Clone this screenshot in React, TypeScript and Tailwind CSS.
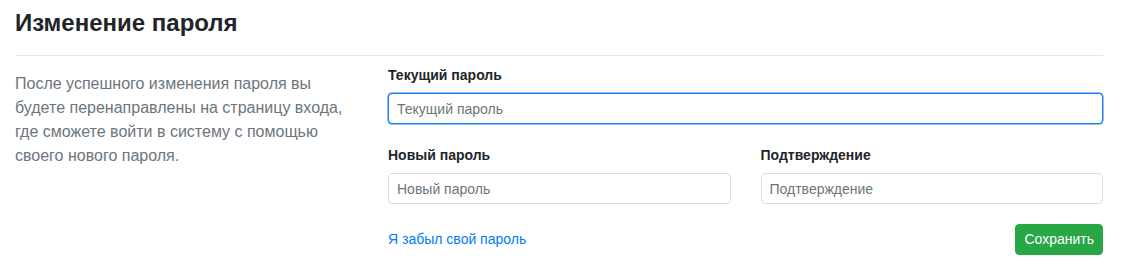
import React from 'react';

const inputBase =
  'block w-full h-[31px] px-2 text-[14px] leading-[21px] text-[#495057] bg-white rounded-[4px] border placeholder:text-[#6c757d] outline-none';

const Field: React.FC<{ label: string; focused?: boolean }> = ({ label, focused }) => (
  <div>
    <label className="block text-[14px] leading-[21px] font-bold text-[#212529] mb-[7px]">{label}</label>
    <input
      type="password"
      placeholder={label}
      className={`${inputBase} ${
        focused
          ? 'border-[#1f7ef5] shadow-[0_0_0_0.5px_#1f7ef5]'
          : 'border-[#dadde1]'
      }`}
    />
  </div>
);

export default function App() {
  return (
    <div
      className="bg-white w-[1121px] h-[277px] pl-[15px] pr-[18px] pt-[8px]"
      style={{ fontFamily: '"Liberation Sans", Arial, sans-serif' }}
    >
      <h1 className="text-[24px] leading-[29px] font-bold text-[#212529]">Изменение пароля</h1>
      <div className="mt-[18px] border-t border-[#e5e5e5]" />

      <div className="flex gap-[30px]">
        {/* Description */}
        <div className="w-[343px] shrink-0 pt-[16px]">
          <p className="text-[16px] leading-[24px] text-[#6c757d]">
            После успешного изменения пароля вы будете перенаправлены на страницу входа, где сможете
            войти в систему с помощью своего нового пароля.
          </p>
        </div>

        {/* Form */}
        <form className="flex-1 pt-[9px]" onSubmit={(e) => e.preventDefault()}>
          <Field label="Текущий пароль" focused />

          <div className="grid grid-cols-2 gap-x-[30px] mt-[21px]">
            <Field label="Новый пароль" />
            <Field label="Подтверждение" />
          </div>

          <div className="flex items-center justify-between mt-[20px]">
            <a href="#" className="text-[14px] leading-[21px] text-[#007bff]">
              Я забыл свой пароль
            </a>
            <button
              type="submit"
              className="h-[31px] px-2 text-[14px] leading-[21px] text-white bg-[#28a745] border border-[#28a745] rounded-[4px]"
            >
              Сохранить
            </button>
          </div>
        </form>
      </div>
    </div>
  );
}
